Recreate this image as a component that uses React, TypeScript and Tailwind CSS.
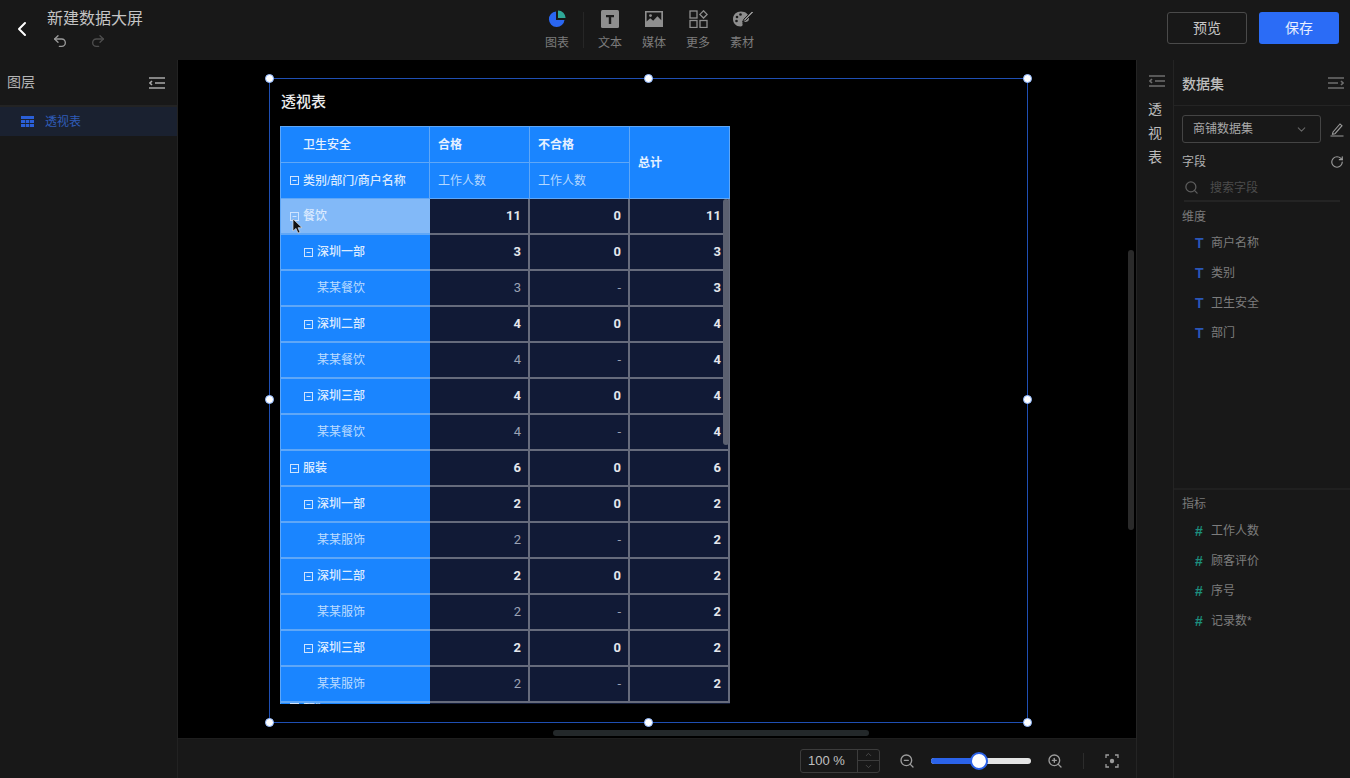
import { ChevronDown, ChevronLeft, Redo2, RotateCw, Search, Undo2, ZoomIn, ZoomOut } from 'lucide-react';

const font = { cjk: "font-['Liberation_Sans','Noto_Sans_CJK_SC',sans-serif]" };

type Row = { name: string; level: 0 | 1 | 2; a: string; b: string; c: string; hover?: boolean };

const rows: Row[] = [
  { name: '餐饮', level: 0, a: '11', b: '0', c: '11', hover: true },
  { name: '深圳一部', level: 1, a: '3', b: '0', c: '3' },
  { name: '某某餐饮', level: 2, a: '3', b: '-', c: '3' },
  { name: '深圳二部', level: 1, a: '4', b: '0', c: '4' },
  { name: '某某餐饮', level: 2, a: '4', b: '-', c: '4' },
  { name: '深圳三部', level: 1, a: '4', b: '0', c: '4' },
  { name: '某某餐饮', level: 2, a: '4', b: '-', c: '4' },
  { name: '服装', level: 0, a: '6', b: '0', c: '6' },
  { name: '深圳一部', level: 1, a: '2', b: '0', c: '2' },
  { name: '某某服饰', level: 2, a: '2', b: '-', c: '2' },
  { name: '深圳二部', level: 1, a: '2', b: '0', c: '2' },
  { name: '某某服饰', level: 2, a: '2', b: '-', c: '2' },
  { name: '深圳三部', level: 1, a: '2', b: '0', c: '2' },
  { name: '某某服饰', level: 2, a: '2', b: '-', c: '2' },
];

function ListIcon({ flip, className }: { flip?: boolean; className?: string }) {
  return (
    <svg width="16" height="14" viewBox="0 0 16 14" className={className} fill="none" stroke="currentColor" strokeWidth="1.6">
      <path d={flip ? 'M0 2h16M0 7h10M0 12h16M13 5l2 2-2 2' : 'M0 2h16M6 7h10M0 12h16M3 5L1 7l2 2'} />
    </svg>
  );
}

function Minus() {
  return (
    <svg width="9" height="9" viewBox="0 0 9 9" className="shrink-0" fill="none" stroke="#cfe4ff" strokeWidth="1">
      <rect x="0.5" y="0.5" width="8" height="8" />
      <path d="M2.5 4.5h4" />
    </svg>
  );
}

function ToolItem({ label, children }: { label: string; children: React.ReactNode }) {
  return (
    <div className="-mt-[2px] flex w-[44px] flex-col items-center gap-[7px]">
      <div className="flex h-[20px] items-center justify-center">{children}</div>
      <span className="text-[12px] leading-[14px] text-[#7c7c7c]">{label}</span>
    </div>
  );
}

function Field({ icon, label, color }: { icon: string; label: string; color: string }) {
  return (
    <div className="flex h-[30px] items-center pl-[13px]">
      <span className={`w-[16px] text-[14px] font-bold ${color}`}>{icon}</span>
      <span className="text-[12px] text-[#7d7d7d]">{label}</span>
    </div>
  );
}

function Handle({ className }: { className: string }) {
  return <div className={`absolute h-[9px] w-[9px] rounded-full border border-[#8fb8ff] bg-white ${className}`} />;
}

function Body({ row }: { row: Row }) {
  const leaf = row.level === 2;
  const num = 'flex h-[36px] items-center justify-end border-r-2 border-b-2 border-[#666b7c] bg-[#111a36] pr-[7px] text-[13px] font-["Roboto",sans-serif]';
  return (
    <>
      <div
        className={`flex h-[36px] items-center gap-[4px] border-b-2 border-[#5fa7f7] text-[12px] ${
          row.hover ? 'bg-[#82b9f8]' : 'bg-[#1a85ff]'
        } ${row.level === 0 ? 'pl-[9px]' : row.level === 1 ? 'pl-[23px]' : 'pl-[36px]'} ${leaf ? 'text-[#bcdcff]' : 'font-medium text-[#dcebff]'}`}
      >
        {!leaf && <Minus />}
        {row.name}
      </div>
      <div className={`${num} ${leaf ? 'text-[#9ca3b5]' : 'font-bold text-[#e4e6ec]'}`}>{row.a}</div>
      <div className={`${num} ${leaf ? 'text-[#9ca3b5]' : 'font-bold text-[#e4e6ec]'}`}>{row.b}</div>
      <div className={`${num} font-bold text-[#e4e6ec]`}>{row.c}</div>
    </>
  );
}

function PivotTable() {
  const head = 'flex h-[36px] items-center border-r border-b border-[#5fa7f7] bg-[#1a85ff] text-[12px]';
  return (
    <div className="relative h-[578px] w-[450px] overflow-hidden border-t border-l border-[#5fa7f7]">
      <div className="grid grid-cols-[149px_100px_100px_100px]">
        <div className={`${head} pl-[22px] font-medium text-[#e6f1ff]`}>卫生安全</div>
        <div className={`${head} pl-[8px] font-bold text-[#e6f1ff]`}>合格</div>
        <div className={`${head} pl-[8px] font-bold text-[#e6f1ff]`}>不合格</div>
        <div className={`${head} row-span-2 h-[72px] pl-[8px] font-bold text-[#e6f1ff]`}>总计</div>
        <div className={`${head} gap-[4px] pl-[9px] font-medium text-[#dcebff]`}>
          <Minus />
          类别/部门/商户名称
        </div>
        <div className={`${head} pl-[8px] text-[#b5d8ff]`}>工作人数</div>
        <div className={`${head} pl-[8px] text-[#b5d8ff]`}>工作人数</div>
        {rows.map((row, i) => (
          <Body key={i} row={row} />
        ))}
        <div className="flex h-[36px] items-start gap-[4px] overflow-hidden bg-[#1a85ff] pl-[9px] text-[12px] leading-[4px] text-[#dcebff]">
          <Minus />
          鞋帽
        </div>
        <div className="h-[36px] bg-[#111a36]" />
        <div className="h-[36px] bg-[#111a36]" />
        <div className="h-[36px] bg-[#111a36]" />
      </div>
      <div className="absolute top-[72px] right-[1px] h-[246px] w-[6px] rounded-[3px] bg-[#5b6070]" />
    </div>
  );
}

export default function App() {
  return (
    <div className={`flex h-[778px] w-[1350px] flex-col overflow-hidden bg-[#181818] ${font.cjk}`}>
      <header className="flex h-[60px] shrink-0 items-center">
        <div className="-mt-[3px] flex w-[535px] items-center">
          <ChevronLeft className="ml-[10px] h-[24px] w-[24px] text-white" strokeWidth={2} />
          <div className="ml-[13px] flex flex-col">
            <span className="text-[16px] leading-[20px] text-[#c4c4c4]">新建数据大屏</span>
            <div className="mt-[4px] flex items-center gap-[22px] pl-[5px]">
              <Undo2 className="h-[16px] w-[16px] text-[#9a9a9a]" />
              <Redo2 className="h-[16px] w-[16px] text-[#4e4e4e]" />
            </div>
          </div>
        </div>
        <ToolItem label="图表">
          <svg width="18" height="18" viewBox="0 0 18 18">
            <path d="M8 1.5a7.8 7.8 0 1 0 8.5 8.5H8z" fill="#2a66f0" />
            <path d="M10 0.5a7.6 7.6 0 0 1 7.6 7.6H10z" fill="#2ea898" />
          </svg>
        </ToolItem>
        <div className="mx-[4px] h-[36px] w-px bg-[#262626]" />
        <ToolItem label="文本">
          <svg width="18" height="18" viewBox="0 0 18 18">
            <rect width="18" height="18" rx="1.5" fill="#8e8e8e" />
            <path d="M5 5h8v2.2h-2.8V14H7.8V7.2H5z" fill="#1c1c1c" />
          </svg>
        </ToolItem>
        <ToolItem label="媒体">
          <svg width="18" height="16" viewBox="0 0 18 16">
            <path fillRule="evenodd" d="M0 0h18v16H0zM1.6 1.6v9l3.6-3.4 3 2.6 4.2-4.6 3.9 4V1.6z" fill="#8e8e8e" />
            <circle cx="5.5" cy="4.6" r="1.4" fill="#8e8e8e" />
          </svg>
        </ToolItem>
        <ToolItem label="更多">
          <svg width="19" height="18" viewBox="0 0 19 18" fill="none" stroke="#8e8e8e" strokeWidth="1.3">
            <rect x="1" y="1" width="7" height="7" />
            <rect x="1" y="10.5" width="7" height="7" />
            <rect x="11" y="10.5" width="7" height="7" />
            <path d="M14.5 0.8l3.6 3.6-3.6 3.6-3.6-3.6z" />
          </svg>
        </ToolItem>
        <ToolItem label="素材">
          <svg width="21" height="18" viewBox="0 0 21 18">
            <path d="M9 1.5c4.6 0 8 2.8 8 7 0 2.6-1.800 3.500-3.600 3.500h-1.800c-1 0-1.500.8-1.100 1.700.5 1.300-.3 2.800-2 2.800C4 16.500 1 13.200 1 9c0-4.400 3.500-7.500 8-7.500z" fill="#8e8e8e" />
            <circle cx="5" cy="7" r="1.300" fill="#1c1c1c" />
            <circle cx="8.500" cy="4.500" r="1.300" fill="#1c1c1c" />
            <circle cx="4.500" cy="11" r="1.300" fill="#1c1c1c" />
            <path d="M20 1l-8 8-1.500 3 3-1.500 8-8z" fill="#8e8e8e" stroke="#1c1c1c" />
          </svg>
        </ToolItem>
        <div className="-mt-[4px] ml-auto flex items-center gap-[12px] pr-[11px]">
          <button className="h-[32px] w-[80px] rounded-[3px] border border-[#4a4a4a] text-[14px] text-[#c8c8c8]">预览</button>
          <button className="h-[32px] w-[80px] rounded-[3px] bg-[#2b6cf6] text-[14px] text-[#e8efff]">保存</button>
        </div>
      </header>

      <div className="flex min-h-0 flex-1">
        <aside className="w-[178px] shrink-0 border-r border-[#222]">
          <div className="flex h-[47px] items-center justify-between border-b-2 border-[#232323] pr-[12px] pl-[7px]">
            <span className="text-[14px] text-[#b4b4b4]">图层</span>
            <ListIcon className="text-[#a8a8a8]" />
          </div>
          <div className="flex h-[29px] items-center gap-[11px] bg-[#1a2130] pl-[21px]">
            <svg width="13" height="11" viewBox="0 0 13 11" fill="#2a5fd8">
              <path d="M0 0h13v3H0zM0 4h4v3H0zM4.700 4h3.600v3H4.700zM9 4h4v3H9zM0 8h4v3H0zM4.700 8h3.600v3H4.700zM9 8h4v3H9z" />
            </svg>
            <span className="text-[12px] text-[#2f5cb8]">透视表</span>
          </div>
        </aside>

        <main className="flex min-w-0 flex-1 flex-col">
          <div className="relative flex-1 bg-black">
            <div className="absolute top-[18px] left-[91px] h-[645px] w-[759px] border border-[#1f4fb3]">
              <Handle className="-top-[5px] -left-[5px]" />
              <Handle className="-top-[5px] left-[374px]" />
              <Handle className="-top-[5px] -right-[5px]" />
              <Handle className="top-[316px] -left-[5px]" />
              <Handle className="top-[316px] -right-[5px]" />
              <Handle className="-bottom-[5px] -left-[5px]" />
              <Handle className="-bottom-[5px] left-[374px]" />
              <Handle className="-right-[5px] -bottom-[5px]" />
              <div className="pt-[12px] pl-[10px]">
                <div className="ml-[1px] text-[15px] leading-[22px] font-medium text-[#ececec]">透视表</div>
                <div className="mt-[13px]">
                  <PivotTable />
                </div>
              </div>
              <svg width="12" height="17" viewBox="0 0 12 17" className="absolute top-[139px] left-[22px]">
                <path d="M1 1v12l3-2.600 2 4.600 2-.8-2-4.500h4z" fill="#111" stroke="#ddd" strokeWidth="0.7" />
              </svg>
            </div>
            <div className="absolute top-[190px] right-[2px] h-[280px] w-[6px] rounded-[3px] bg-[#2a2a2a]" />
            <div className="absolute bottom-[2px] left-[375px] h-[6px] w-[316px] rounded-[3px] bg-[#23282a]" />
          </div>
          <div className="flex h-[40px] shrink-0 items-center border-t border-[#1e1e1e] pt-[4px] pl-[622px]">
            <div className="flex h-[24px] w-[80px] items-center rounded-[3px] border border-[#3c3c3c]">
              <span className="w-[56px] pl-[7px] text-[13px] text-[#c0c0c0]">100 %</span>
              <div className="flex h-full flex-1 flex-col border-l border-[#3c3c3c] text-[#555]">
                <div className="flex flex-1 items-center justify-center border-b border-[#3c3c3c]">
                  <ChevronDown className="h-[9px] w-[9px] rotate-180" />
                </div>
                <div className="flex flex-1 items-center justify-center">
                  <ChevronDown className="h-[9px] w-[9px]" />
                </div>
              </div>
            </div>
            <ZoomOut className="ml-[19px] h-[16px] w-[16px] text-[#9c9c9c]" />
            <div className="relative ml-[16px] flex h-[6px] w-[100px] rounded-[3px] bg-[#e4e4e4]">
              <div className="h-full w-[47px] rounded-l-[3px] bg-[#2b63ea]" />
              <div className="absolute top-[-6px] left-[39px] h-[18px] w-[18px] rounded-full border-2 border-[#2b63ea] bg-white" />
            </div>
            <ZoomIn className="ml-[16px] h-[16px] w-[16px] text-[#9c9c9c]" />
            <div className="ml-[20px] h-[16px] w-px bg-[#2c2c2c]" />
            <svg width="14" height="14" viewBox="0 0 14 14" className="ml-[21px]" fill="none" stroke="#9c9c9c" strokeWidth="1.300">
              <path d="M1 4V1h3M10 1h3v3M13 10v3h-3M4 13H1v-3" />
              <circle cx="7" cy="7" r="2.200" fill="#9c9c9c" stroke="none" />
            </svg>
          </div>
        </main>

        <div className="flex w-[38px] shrink-0 flex-col items-center border-x border-[#242424] pt-[14px]">
          <ListIcon className="ml-[4px] text-[#6e6e6e]" />
          <div className="mt-[11px] flex flex-col gap-[4px] text-[14px] leading-[20px] text-[#bcbcbc]">
            <span>透</span>
            <span>视</span>
            <span>表</span>
          </div>
        </div>

        <aside className="flex w-[176px] shrink-0 flex-col">
          <div className="flex h-[46px] items-center justify-between border-b border-[#242424] pr-[6px] pl-[8px]">
            <span className="pt-[3px] text-[14px] font-medium text-[#bdbdbd]">数据集</span>
            <ListIcon flip className="text-[#6e6e6e]" />
          </div>
          <div className="mt-[9px] flex items-center pl-[8px]">
            <div className="flex h-[28px] w-[139px] items-center justify-between rounded-[3px] border border-[#444] pr-[12px] pl-[10px]">
              <span className="text-[12px] text-[#a8a8a8]">商铺数据集</span>
              <ChevronDown className="h-[13px] w-[13px] text-[#666]" />
            </div>
            <svg width="14" height="15" viewBox="0 0 14 15" className="ml-[9px]" fill="none" stroke="#9a9a9a" strokeWidth="1.100">
              <path d="M3 10l7-8 2 1.700-7 8-2.500.6zM0.500 14h13" />
            </svg>
          </div>
          <div className="mt-[9px] flex h-[20px] items-center justify-between pr-[6px] pl-[8px]">
            <span className="text-[12px] text-[#b0b0b0]">字段</span>
            <RotateCw className="h-[14px] w-[14px] text-[#9a9a9a]" />
          </div>
          <div className="mx-[10px] mt-[5px] flex h-[25px] items-center gap-[11px] border-b-2 border-[#242424] pb-[2px]">
            <Search className="h-[15px] w-[15px] text-[#5e5e5e]" />
            <span className="text-[12px] text-[#4c4c4c]">搜索字段</span>
          </div>
          <div className="mt-[7px] pl-[8px] text-[12px] leading-[16px] text-[#7a7a7a]">维度</div>
          <div className="mt-[3px] flex h-[262px] flex-col border-b-2 border-[#202020] pl-[8px]">
            <Field icon="T" label="商户名称" color="text-[#2a56b8]" />
            <Field icon="T" label="类别" color="text-[#2a56b8]" />
            <Field icon="T" label="卫生安全" color="text-[#2a56b8]" />
            <Field icon="T" label="部门" color="text-[#2a56b8]" />
          </div>
          <div className="mt-[6px] pl-[8px] text-[12px] leading-[16px] text-[#7a7a7a]">指标</div>
          <div className="mt-[4px] flex flex-col pl-[8px]">
            <Field icon="#" label="工作人数" color="text-[#1c8f7e]" />
            <Field icon="#" label="顾客评价" color="text-[#1c8f7e]" />
            <Field icon="#" label="序号" color="text-[#1c8f7e]" />
            <Field icon="#" label="记录数*" color="text-[#1c8f7e]" />
          </div>
        </aside>
      </div>
    </div>
  );
}
